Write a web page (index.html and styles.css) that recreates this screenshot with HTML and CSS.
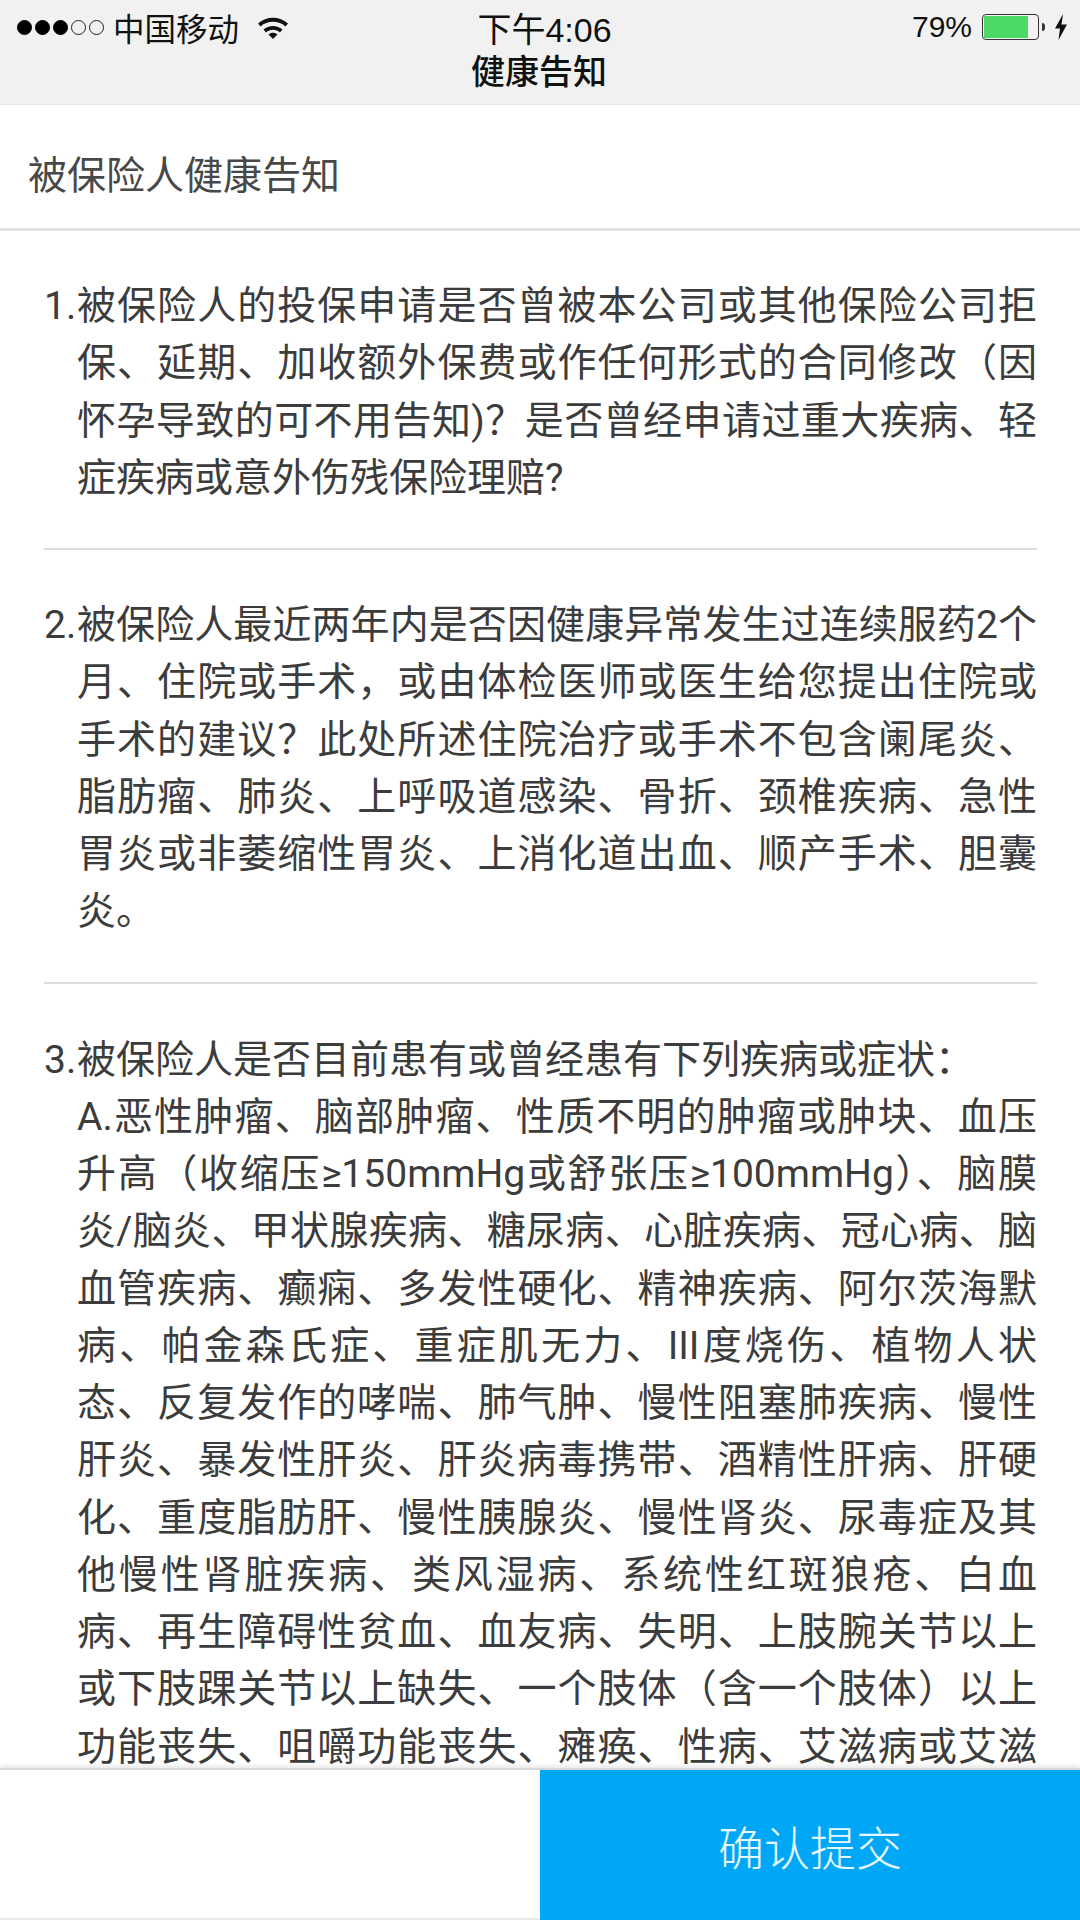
FILE: index.html
```html
<!DOCTYPE html>
<html lang="zh-CN">
<head>
  <meta charset="UTF-8">
  <title>健康告知</title>
  <link rel="stylesheet" href="styles.css">
</head>
<body>

<div class="page">
  <div class="top-bar">
    <div class="status-bar">
      <div class="status-left">
        <span class="signal">
          <i class="dot on"></i><i class="dot on"></i><i class="dot on"></i><i class="dot"></i><i class="dot"></i>
        </span>
        <span class="carrier">中国移动</span>
        <svg class="wifi" viewBox="0 0 32 24" width="32" height="24">
          <path d="M1 8.500C9.500 .8 22.500 .8 31 8.500L28.500 11.500C21.500 5.300 10.500 5.300 3.500 11.500Z"/>
          <path d="M6.500 14.500C12 9.700 20 9.700 25.500 14.500L23 17.500C18.800 13.900 13.200 13.900 9 17.500Z"/>
          <path d="M11.500 19.500C14.300 17.300 17.700 17.300 20.500 19.500L16 24Z"/>
        </svg>
      </div>
      <div class="status-time">下午4:06</div>
      <div class="status-right">
        <span class="percent">79%</span>
        <span class="battery"><span class="battery-fill"></span></span>
        <span class="battery-tip"></span>
        <svg class="bolt" viewBox="0 0 14 26" width="14" height="26">
          <path d="M9 0L1 14.500H6L4.500 26L13 10.500H7.500Z"/>
        </svg>
      </div>
    </div>
    <div class="nav-title">健康告知</div>
  </div>

  <div class="section-title">被保险人健康告知</div>

  <div class="content">
    <div class="item">
      <div class="question">
        <span class="num">1.</span>
        <div class="lines">
          <span class="line">被保险人的投保申请是否曾被本公司或其他保险公司拒</span>
          <span class="line">保、延期、加收额外保费或作任何形式的合同修改（因</span>
          <span class="line">怀孕导致的可不用告知)？是否曾经申请过重大疾病、轻</span>
          <span class="line end">症疾病或意外伤残保险理赔?</span>
        </div>
      </div>
    </div>
    <div class="item">
      <div class="question">
        <span class="num">2.</span>
        <div class="lines">
          <span class="line">被保险人最近两年内是否因健康异常发生过连续服药2个</span>
          <span class="line">月、住院或手术，或由体检医师或医生给您提出住院或</span>
          <span class="line">手术的建议？此处所述住院治疗或手术不包含阑尾炎、</span>
          <span class="line">脂肪瘤、肺炎、上呼吸道感染、骨折、颈椎疾病、急性</span>
          <span class="line">胃炎或非萎缩性胃炎、上消化道出血、顺产手术、胆囊</span>
          <span class="line end">炎。</span>
        </div>
      </div>
    </div>
    <div class="item">
      <div class="question">
        <span class="num">3.</span>
        <div class="lines">
          <span class="line end">被保险人是否目前患有或曾经患有下列疾病或症状：</span>
          <span class="line">A.恶性肿瘤、脑部肿瘤、性质不明的肿瘤或肿块、血压</span>
          <span class="line">升高（收缩压≥150mmHg或舒张压≥100mmHg）、脑膜</span>
          <span class="line">炎/脑炎、甲状腺疾病、糖尿病、心脏疾病、冠心病、脑</span>
          <span class="line">血管疾病、癫痫、多发性硬化、精神疾病、阿尔茨海默</span>
          <span class="line">病、帕金森氏症、重症肌无力、III度烧伤、植物人状</span>
          <span class="line">态、反复发作的哮喘、肺气肿、慢性阻塞肺疾病、慢性</span>
          <span class="line">肝炎、暴发性肝炎、肝炎病毒携带、酒精性肝病、肝硬</span>
          <span class="line">化、重度脂肪肝、慢性胰腺炎、慢性肾炎、尿毒症及其</span>
          <span class="line">他慢性肾脏疾病、类风湿病、系统性红斑狼疮、白血</span>
          <span class="line">病、再生障碍性贫血、血友病、失明、上肢腕关节以上</span>
          <span class="line">或下肢踝关节以上缺失、一个肢体（含一个肢体）以上</span>
          <span class="line">功能丧失、咀嚼功能丧失、瘫痪、性病、艾滋病或艾滋</span>
        </div>
      </div>
    </div>
  </div>

  <div class="footer">
    <div class="footer-left"></div>
    <button class="submit">确认提交</button>
  </div>
</div>

</body>
</html>
```

FILE: styles.css
```css
* {
  box-sizing: border-box;
}

html, body {
  margin: 0;
  padding: 0;
}

body {
  font-family: "Liberation Sans", "Noto Sans CJK SC", sans-serif;
  color: #333;
  background: #fff;
}

.page {
  width: 1080px;
  height: 1920px;
  display: flex;
  flex-direction: column;
  overflow: hidden;
}

.top-bar {
  height: 105px;
  flex: none;
  background: #f1f1f1;
  border-bottom: 1px solid #e6e6e6;
  color: #111;
}

.status-bar {
  height: 54px;
  padding: 0 12px 0 17px;
  display: grid;
  grid-template-columns: 1fr auto 1fr;
  align-items: center;
}

.status-left,
.status-right {
  display: flex;
  align-items: center;
}

.status-right {
  justify-content: flex-end;
}

.signal {
  display: flex;
  gap: 3px;
}

.dot {
  width: 15px;
  height: 15px;
  border: 1px solid #222;
  border-radius: 50%;
}

.dot.on {
  background: #000;
  border-color: #000;
}

.carrier {
  font-size: 31.500px;
  margin-left: 9px;
}

.wifi {
  margin-left: 18px;
  fill: #111;
}

.status-time {
  font-size: 34px;
  margin-left: 4px;
}

.percent {
  font-size: 30px;
}

.battery {
  width: 57px;
  height: 26px;
  margin-left: 10px;
  padding: 1px;
  border: 1px solid #333;
  border-radius: 4px;
  display: block;
}

.battery-fill {
  display: block;
  width: 44px;
  height: 100%;
  background: #4cd964;
}

.battery-tip {
  width: 3px;
  height: 8px;
  margin-left: 3px;
  background: #333;
  border-radius: 0 3px 3px 0;
}

.bolt {
  margin-left: 9px;
  fill: #111;
}

.nav-title {
  font-size: 34px;
  font-weight: 500;
  line-height: 36px;
  text-align: center;
  padding-right: 2px;
}

.section-title {
  height: 126px;
  flex: none;
  padding: 10px 0 0 28px;
  display: flex;
  align-items: center;
  font-size: 39px;
  font-weight: 400;
  color: #484848;
  border-bottom: 3px solid #e4e4e4;
}

.content {
  flex: 1;
  min-height: 0;
  padding: 0 43px 0 44px;
}

.item {
  padding: 47px 0 41px;
  border-bottom: 2px solid #dcdcdc;
}

.item:last-child {
  border-bottom: none;
  padding-top: 48px;
}

.question {
  display: flex;
  font-size: 39px;
  line-height: 57.250px;
  font-weight: 400;
  color: #3c3c3c;
  font-family: Roboto, "Noto Sans CJK SC", sans-serif;
}

.num {
  width: 33px;
  flex: none;
}

.lines {
  flex: 1;
  min-width: 0;
}

.line {
  display: block;
  white-space: nowrap;
  text-align: justify;
  text-align-last: justify;
}

.line.end {
  text-align-last: left;
}

.footer {
  height: 152px;
  flex: none;
  display: flex;
  background: #fff;
  border-top: 2px solid #d8d8d8;
  box-shadow: 0 -2px 5px rgba(0, 0, 0, 0.1);
  position: relative;
}

.footer-left {
  flex: 1;
  border-bottom: 2px solid #e8e8e8;
}

.submit {
  width: 540px;
  border: none;
  background: #00a7f7;
  color: #e8f8ff;
  font-family: inherit;
  font-size: 46px;
  font-weight: 300;
}
```
